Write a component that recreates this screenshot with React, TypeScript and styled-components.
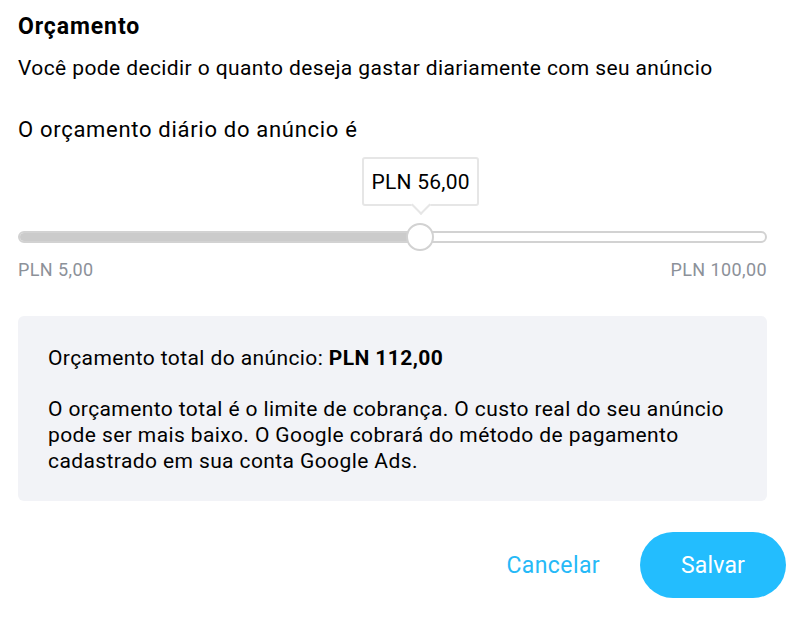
import React, { FC } from 'react';
import styled, { createGlobalStyle } from 'styled-components';

const GlobalStyle = createGlobalStyle`
  body {
    margin: 0;
    background: #ffffff;
    font-family: Roboto, "Noto Sans", Arial, sans-serif;
    color: #000000;
  }
`;

const Page = styled.div`
  width: 810px;
  box-sizing: border-box;
  padding: 14px 43px 0 18px;
`;

const Title = styled.h2`
  margin: 0;
  font-size: 23px;
  line-height: 26px;
  font-weight: 700;
  letter-spacing: 0.9px;
`;

const Subtitle = styled.p`
  margin: 15px 0 0;
  font-size: 21px;
  line-height: 26px;
  letter-spacing: 0.4px;
`;

const Label = styled.p`
  margin: 36px 0 0;
  font-size: 22px;
  line-height: 26px;
  letter-spacing: 0.7px;
`;

const SliderArea = styled.div`
  position: relative;
  margin-top: 14px;
  padding-top: 66px;
`;

const Tooltip = styled.div`
  position: absolute;
  top: 0;
  width: 117px;
  height: 49px;
  box-sizing: border-box;
  margin-left: -58px;
  border: 2px solid #e6e6e6;
  border-radius: 3px;
  background: #ffffff;
  display: flex;
  align-items: center;
  justify-content: center;
  font-size: 21px;
  letter-spacing: 0.25px;

  &::after {
    content: '';
    position: absolute;
    left: 50%;
    bottom: -8px;
    width: 12px;
    height: 12px;
    margin-left: -7px;
    background: #ffffff;
    border-right: 2px solid #e6e6e6;
    border-bottom: 2px solid #e6e6e6;
    transform: rotate(45deg);
  }
`;

const TrackRow = styled.div`
  position: relative;
  height: 28px;
  display: flex;
  align-items: center;
`;

const Track = styled.div`
  position: relative;
  width: 100%;
  height: 12px;
  box-sizing: border-box;
  border: 2px solid #d2d2d2;
  border-radius: 6px;
  background: #ffffff;
  overflow: hidden;
`;

const Fill = styled.div`
  height: 100%;
  background: #cbcbcb;
`;

const Thumb = styled.div`
  position: absolute;
  top: 0;
  width: 28px;
  height: 28px;
  margin-left: -14px;
  box-sizing: border-box;
  border-radius: 50%;
  border: 2px solid #d2d2d2;
  background: #ffffff;
`;

const RangeLabels = styled.div`
  display: flex;
  justify-content: space-between;
  margin-top: 8px;
  font-size: 18px;
  line-height: 22px;
  letter-spacing: 0.4px;
  color: #8c9199;
`;

const InfoBox = styled.div`
  margin-top: 35px;
  padding: 29px 30px 27px;
  border-radius: 6px;
  background: #f2f3f7;
`;

const Total = styled.p`
  margin: 0;
  font-size: 21px;
  line-height: 26px;
  letter-spacing: 0.4px;
`;

const Note = styled.p`
  margin: 25px 0 0;
  font-size: 21px;
  line-height: 26px;
  letter-spacing: 0.4px;
`;

const Footer = styled.div`
  display: flex;
  justify-content: flex-end;
  align-items: center;
  gap: 40px;
  margin-top: 31px;
  margin-right: -19px;
`;

const TextButton = styled.button`
  border: none;
  background: none;
  padding: 0;
  font-family: inherit;
  font-size: 23px;
  letter-spacing: 0.4px;
  color: #26b9f7;
  cursor: pointer;
`;

const PrimaryButton = styled.button`
  width: 146px;
  height: 66px;
  border: none;
  border-radius: 33px;
  background: #23bdfe;
  color: #ffffff;
  font-family: inherit;
  font-size: 23px;
  letter-spacing: 0.2px;
  cursor: pointer;
`;

interface IBudgetSliderProps {
  min: number;
  max: number;
  value: number;
}

const formatPln = (n: number) => `PLN ${n.toFixed(2).replace('.', ',')}`;

const BudgetSlider: FC<IBudgetSliderProps> = ({ min, max, value }) => {
  const pct = ((value - min) / (max - min)) * 100;
  return (
    <SliderArea>
      <Tooltip style={{ left: `${pct}%` }}>{formatPln(value)}</Tooltip>
      <TrackRow>
        <Track>
          <Fill style={{ width: `${pct}%` }} />
        </Track>
        <Thumb style={{ left: `${pct}%` }} />
      </TrackRow>
      <RangeLabels>
        <span>{formatPln(min)}</span>
        <span>{formatPln(max)}</span>
      </RangeLabels>
    </SliderArea>
  );
};

const App: FC = () => (
  <Page>
    <GlobalStyle />
    <Title>Orçamento</Title>
    <Subtitle>Você pode decidir o quanto deseja gastar diariamente com seu anúncio</Subtitle>
    <Label>O orçamento diário do anúncio é</Label>
    <BudgetSlider min={5} max={100} value={56} />
    <InfoBox>
      <Total>
        Orçamento total do anúncio: <strong>PLN 112,00</strong>
      </Total>
      <Note>
        O orçamento total é o limite de cobrança. O custo real do seu anúncio pode ser mais
        baixo. O Google cobrará do método de pagamento cadastrado em sua conta Google Ads.
      </Note>
    </InfoBox>
    <Footer>
      <TextButton>Cancelar</TextButton>
      <PrimaryButton>Salvar</PrimaryButton>
    </Footer>
  </Page>
);

export default App;
